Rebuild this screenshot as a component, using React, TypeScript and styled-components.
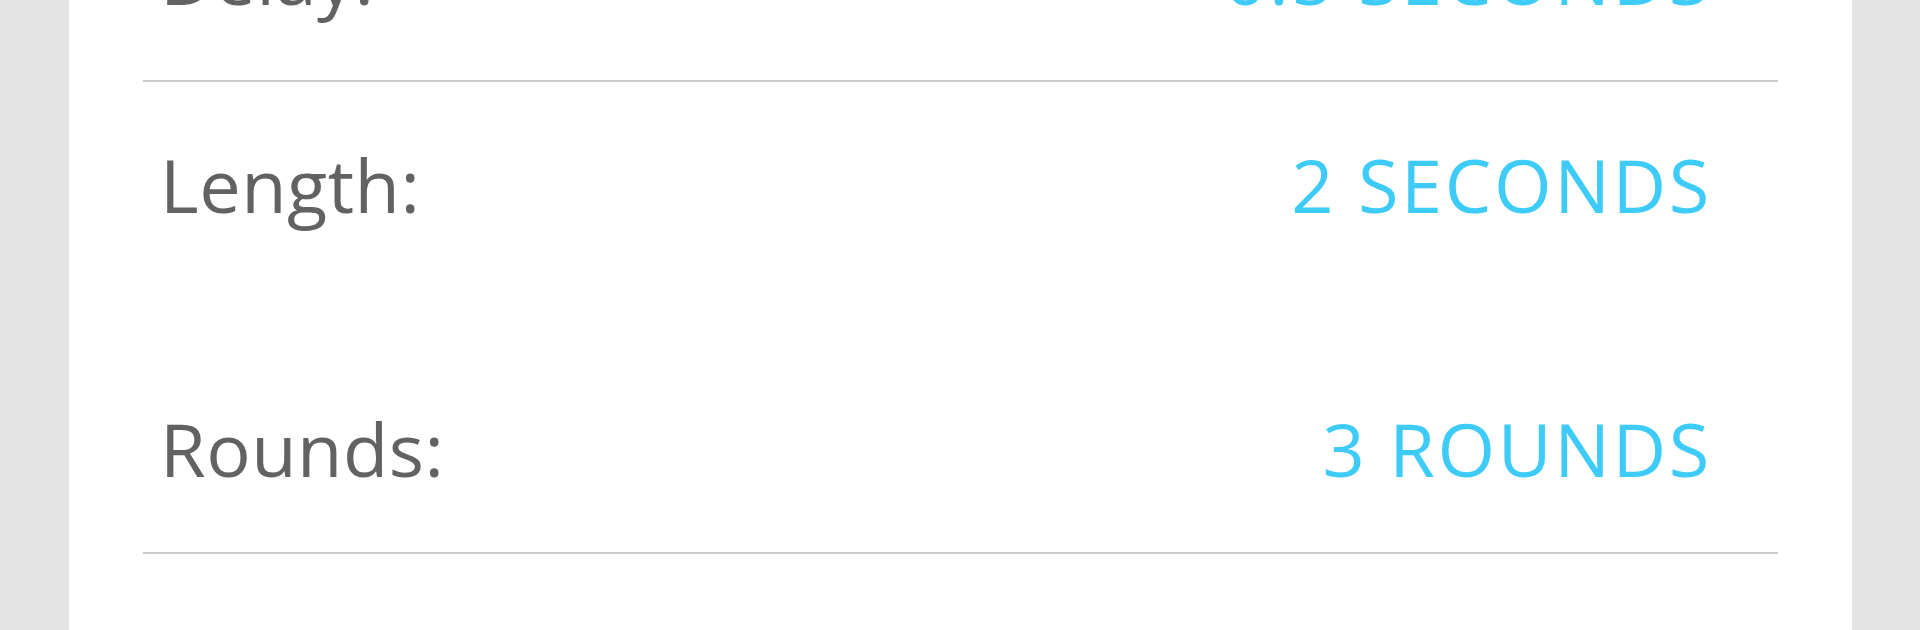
import React from 'react';
import styled, { createGlobalStyle } from 'styled-components';

const GlobalStyle = createGlobalStyle`
  html, body {
    margin: 0;
    padding: 0;
    height: 100%;
    overflow: hidden;
    background-color: #e4e4e4;
  }
  #root {
    height: 100%;
  }
`;

const Page = styled.div`
  height: 630px;
  display: flex;
  justify-content: flex-start;
  padding-left: 69px;
  font-family: 'Open Sans', 'Noto Sans', sans-serif;
`;

const Panel = styled.div`
  width: 1783px;
  height: 630px;
  background-color: #ffffff;
  padding: 0 74px;
  box-sizing: border-box;
  overflow: hidden;
`;

// the settings list is scrolled, so the first row is half out of view
const List = styled.div`
  margin-top: -126px;
  display: flex;
  flex-direction: column;
`;

const Group = styled.div`
  display: flex;
  flex-direction: column;
  gap: 58px;
`;

const Divider = styled.div`
  height: 2px;
  background-color: #cbcbcb;
`;

const Row = styled.div`
  height: 206px;
  display: flex;
  align-items: center;
  justify-content: space-between;
  padding: 0 66px 0 17px;
  font-size: 74px;
  line-height: 1;
  font-weight: 400;
`;

const Label = styled.span`
  color: #626262;
  letter-spacing: 0.5px;
`;

const Value = styled.span`
  color: #3ecbf8;
  text-transform: uppercase;
  letter-spacing: 2.6px;
`;

type Setting = { label: string; value: string };

const SettingRow = ({ label, value }: Setting) => (
  <Row>
    <Label>{label}</Label>
    <Value>{value}</Value>
  </Row>
);

const App: React.FC = () => {
  return (
    <>
      <GlobalStyle />
      <Page>
        <Panel>
          <List>
            <SettingRow label="Delay:" value="0.5 seconds" />
            <Divider />
            <Group>
              <SettingRow label="Length:" value="2 seconds" />
              <SettingRow label="Rounds:" value="3 rounds" />
            </Group>
            <Divider />
          </List>
        </Panel>
      </Page>
    </>
  );
};

export default App;
